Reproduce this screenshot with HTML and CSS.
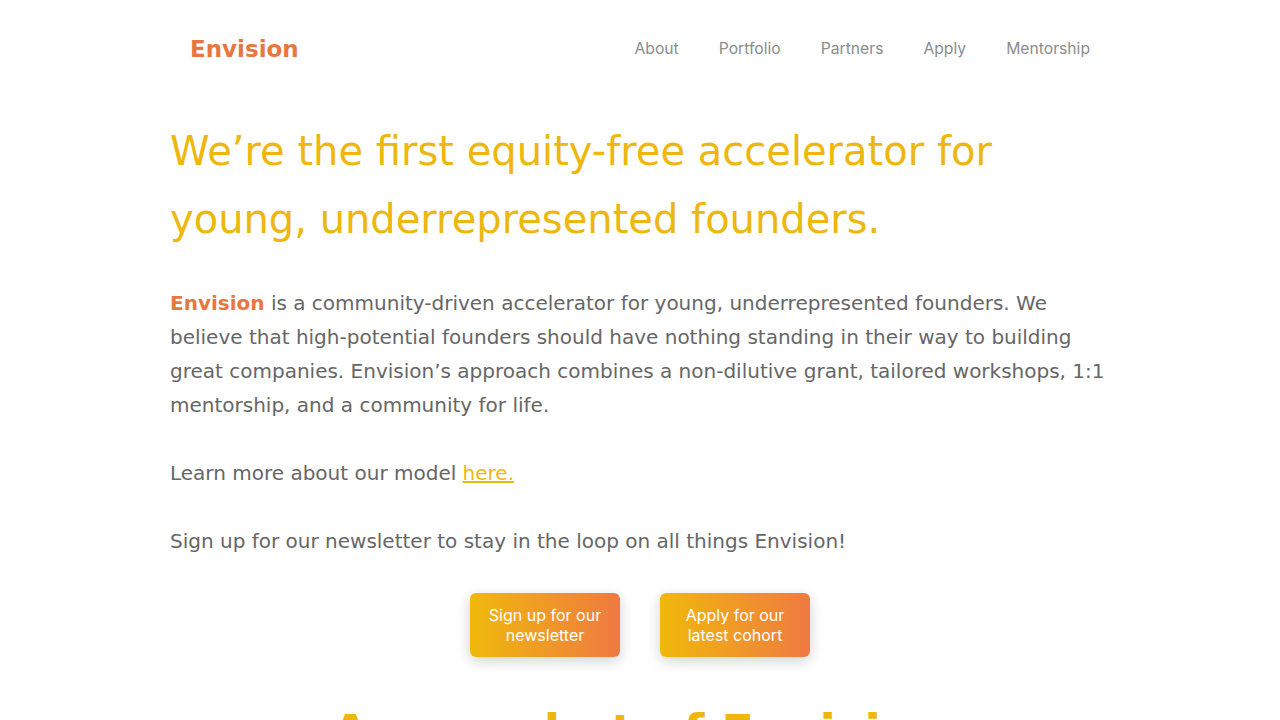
FILE: index.html
```html
<!DOCTYPE html>
<html lang="en">
<head>
<meta charset="utf-8">
<title>Envision</title>
<link rel="stylesheet" href="styles.css">
</head>
<body>
<div class="container">
  <header class="header">
    <a class="logo" href="#">Envision</a>
    <nav class="nav">
      <a href="#">About</a>
      <a href="#">Portfolio</a>
      <a href="#">Partners</a>
      <a href="#">Apply</a>
      <a href="#">Mentorship</a>
    </nav>
  </header>
  <main>
    <h1 class="hero">We’re the first equity-free accelerator for young, underrepresented founders.</h1>
    <p class="text intro"><strong class="brand">Envision</strong> is a community-driven accelerator for young, underrepresented founders. We believe that high-potential founders should have nothing standing in their way to building great companies. Envision’s approach combines a non-dilutive grant, tailored workshops, 1:1 mentorship, and a community for life.</p>
    <p class="text">Learn more about our model <a class="link" href="#">here.</a></p>
    <p class="text">Sign up for our newsletter to stay in the loop on all things Envision!</p>
    <div class="buttons">
      <a class="btn" href="#">Sign up for our newsletter</a>
      <a class="btn" href="#">Apply for our latest cohort</a>
    </div>
    <h2 class="section-title">A snapshot of Envision</h2>
  </main>
</div>
</body>
</html>
```
FILE: styles.css
```css
html, body {
  margin: 0;
  padding: 0;
  background: #ffffff;
}
body {
  font-family: "DejaVu Sans", sans-serif;
  color: #666666;
}
.container {
  width: 940px;
  margin: 0 auto;
}
.header {
  display: flex;
  justify-content: space-between;
  align-items: center;
  height: 97px;
  padding: 0 20px;
}
.logo {
  font-family: "DejaVu Sans", sans-serif;
  font-weight: bold;
  font-size: 23px;
  color: #e8773f;
  text-decoration: none;
}
.nav {
  display: flex;
  gap: 40px;
}
.nav a {
  font-family: "Inter", sans-serif;
  font-size: 15.7px;
  color: #8c8c8c;
  text-decoration: none;
}
.hero {
  margin: 20px 0 0;
  font-weight: normal;
  font-size: 40px;
  line-height: 68px;
  color: #eeb70e;
}
.text {
  margin: 34px 0 0;
  font-size: 20px;
  line-height: 34px;
  color: #666666;
}
.text.intro {
  margin-top: 33px;
}
.brand {
  color: #e8773f;
}
.link {
  color: #eeb70e;
}
.buttons {
  display: flex;
  justify-content: center;
  gap: 40px;
  margin-top: 35px;
}
.btn {
  width: 150px;
  height: 64px;
  box-sizing: border-box;
  display: flex;
  align-items: center;
  justify-content: center;
  text-align: center;
  padding: 0 14px;
  border-radius: 6px;
  background: linear-gradient(90deg, #f0b90b 0%, #ee7a42 100%);
  box-shadow: 0 4px 14px rgba(0, 0, 0, 0.18);
  color: #ffffff;
  font-family: "Inter", sans-serif;
  font-size: 16px;
  line-height: 20px;
  text-decoration: none;
}
.section-title {
  margin: 47px 0 0;
  text-align: center;
  font-size: 48px;
  font-weight: bold;
  color: #eeb70e;
}
```
